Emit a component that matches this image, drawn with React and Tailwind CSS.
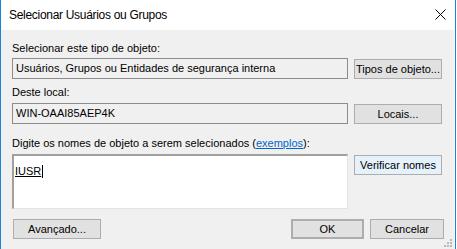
export default function App() {
  const btn =
    'h-[20px] flex items-center justify-center border border-[#adadad] bg-[#e1e1e1] text-[11px] text-black leading-none';
  const box =
    'h-[21px] w-[336px] border border-[#8c8c8c] bg-[#f0f0f0] flex items-center px-[3px] text-[11px] leading-none text-black';

  return (
    <div className="w-[456px] h-[249px] border-x border-[#1883d7] bg-white flex flex-col font-['Liberation_Sans',Arial,sans-serif] overflow-hidden">
      {/* barra de título */}
      <div className="h-[30px] shrink-0 flex items-center justify-between pl-[8px] pr-[9px]">
        <span className="text-[12px] tracking-[-0.3px] text-black">Selecionar Usuários ou Grupos</span>
        <svg width="11" height="11" viewBox="0 0 11 11" className="-mt-[1px]">
          <path d="M0.5 0.5 L10.5 10.5 M10.5 0.5 L0.5 10.5" stroke="#000" strokeWidth="1" />
        </svg>
      </div>

      {/* corpo */}
      <div className="relative flex-1 bg-[#f0f0f0] mr-px pl-[11px] flex flex-col">
        <div className="pt-[12px] text-[11px] leading-[13px] text-black">Selecionar este tipo de objeto:</div>
        <div className="mt-[3px] flex items-start gap-[6px]">
          <div className={box}>Usuários, Grupos ou Entidades de segurança interna</div>
          <div className={btn + ' w-[88px] mt-px'}>Tipos de objeto...</div>
        </div>

        <div className="mt-[7px] text-[11px] leading-[13px] text-black">Deste local:</div>
        <div className="mt-[4px] flex items-start gap-[6px]">
          <div className={box}>WIN-OAAI85AEP4K</div>
          <div className={btn + ' w-[88px] mt-px'}>Locais...</div>
        </div>

        <div className="mt-[13px] text-[11px] leading-[13px] text-black">
          Digite os nomes de objeto a serem selecionados (
          <span className="text-[#0066cc] underline">exemplos</span>):
        </div>
        <div className="mt-[4px] flex items-start gap-[6px]">
          <div className="h-[55px] w-[336px] bg-white border-t-2 border-l-2 border-t-[#a0a0a0] border-l-[#a0a0a0] border-r border-b border-r-[#e3e3e3] border-b-[#e3e3e3] px-[1px] pt-[2px]">
            <span className="inline-flex items-center text-[11px] leading-[13px] text-black">
              <span className="underline">IUSR</span>
              <span className="ml-[1px] w-px h-[13px] bg-black" />
            </span>
          </div>
          <div className={btn + ' w-[88px] mt-px bg-[#e5f1fb] border-[#0078d7]'}>Verificar nomes</div>
        </div>

        <div className="mt-[10px] flex items-center pr-[10px]">
          <div className={btn + ' w-[88px] ml-px'}>Avançado...</div>
          <div className="flex-1" />
          <div className={btn + ' w-[73px] border-2 border-[#0078d7]'}>OK</div>
          <div className={btn + ' w-[74px] ml-[6px]'}>Cancelar</div>
        </div>

        {/* alça de redimensionamento */}
        <svg width="9" height="9" viewBox="0 0 9 9" className="absolute right-[1px] bottom-[1px]">
          <rect x="6" y="0" width="2" height="2" fill="#b8b8b8" />
          <rect x="3" y="3" width="2" height="2" fill="#b8b8b8" />
          <rect x="6" y="3" width="2" height="2" fill="#b8b8b8" />
          <rect x="0" y="6" width="2" height="2" fill="#b8b8b8" />
          <rect x="3" y="6" width="2" height="2" fill="#b8b8b8" />
          <rect x="6" y="6" width="2" height="2" fill="#b8b8b8" />
        </svg>
      </div>
    </div>
  );
}
